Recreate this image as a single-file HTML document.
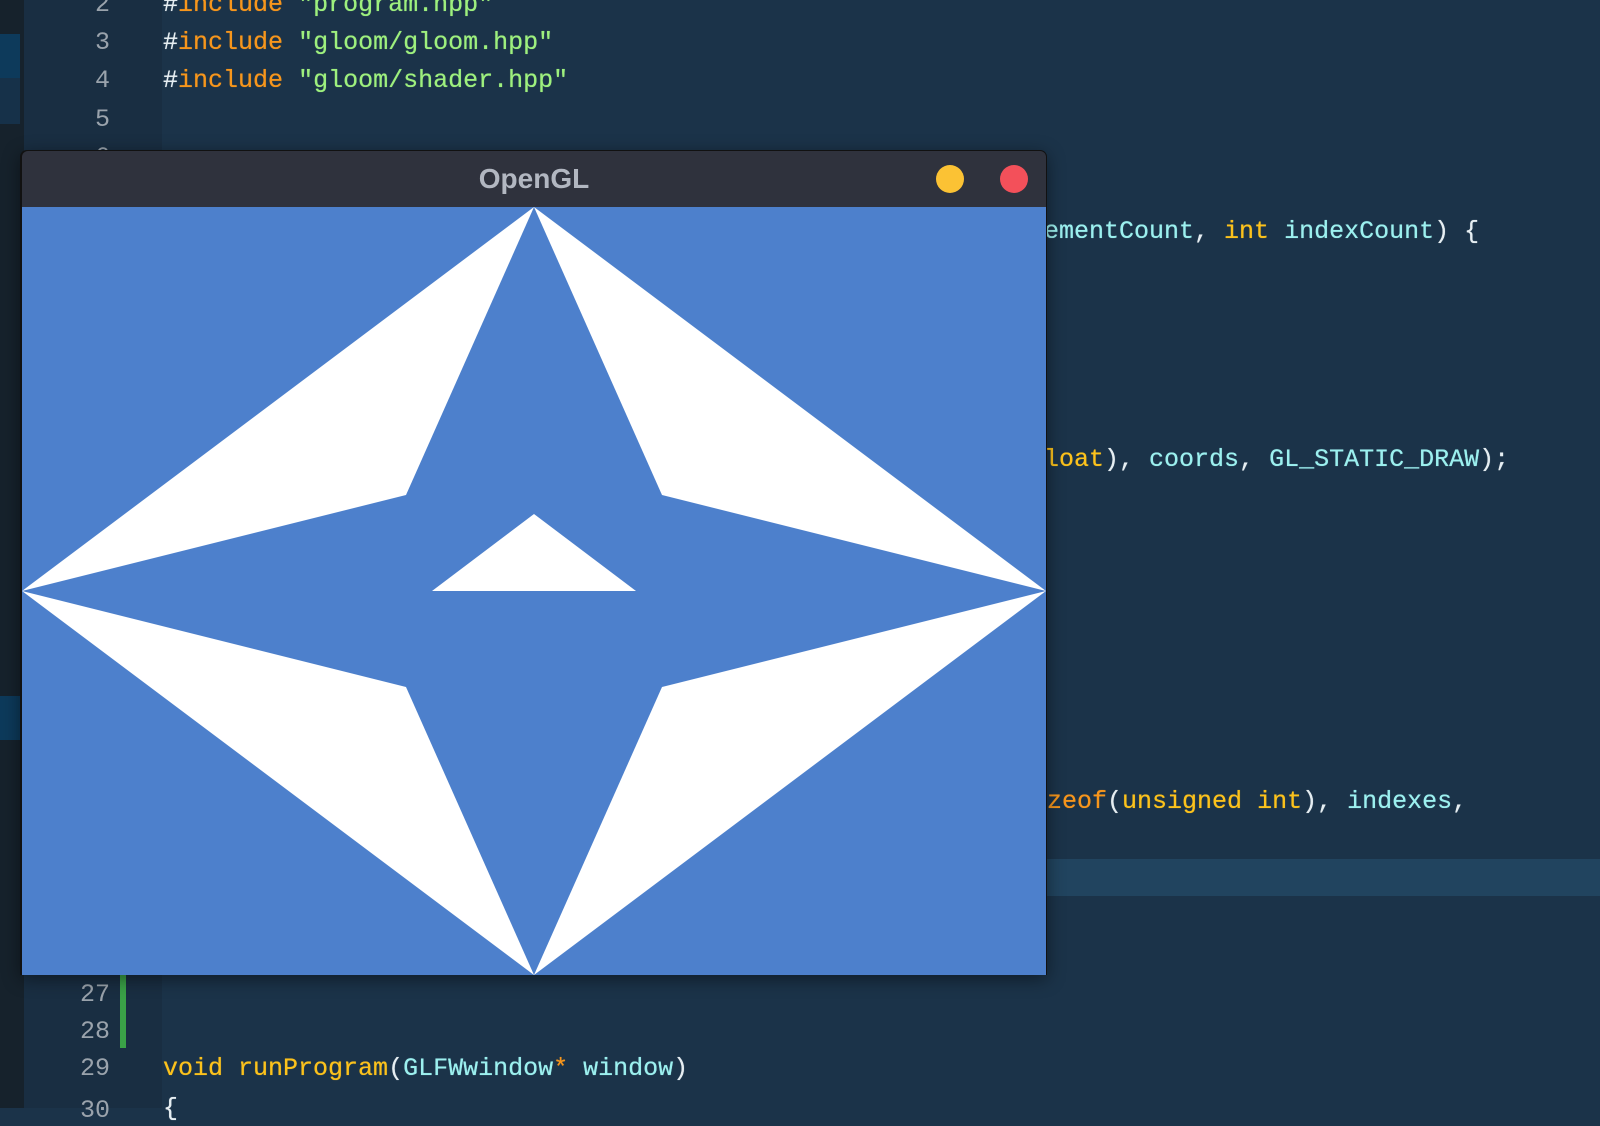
<!DOCTYPE html>
<html><head><meta charset="utf-8"><style>
html,body{margin:0;padding:0;width:1600px;height:1108px;overflow:hidden;background:#1b3349;}
.strip{position:absolute;left:0;top:0;width:24px;height:1108px;background:#16222c;}
.gut{position:absolute;left:24px;top:0;width:138px;height:1108px;background:#192e42;}
.t{position:absolute;font-family:"Liberation Mono",monospace;font-size:25px;line-height:30px;white-space:pre;color:#e6eef2;text-shadow:0 0 0.6px currentColor;}
.n{position:absolute;font-family:"Liberation Mono",monospace;font-size:25px;line-height:30px;color:#9aa3ac;width:86px;text-align:right;left:24px;}
.o{color:#f7961c}.g{color:#9ef07e}.c{color:#9cf0ef}.y{color:#fcc21c}.w{color:#e6eef2}
</style></head><body>
<div class="strip"></div>
<div style="position:absolute;left:0;top:34px;width:20px;height:44px;background:#0d3a5b"></div>
<div style="position:absolute;left:0;top:78px;width:20px;height:46px;background:#163149"></div>
<div style="position:absolute;left:0;top:696px;width:20px;height:44px;background:#0d3a5b"></div>
<div class="gut"></div>
<div style="position:absolute;left:1047px;top:859px;width:553px;height:37px;background:#21445f"></div>
<div style="position:absolute;left:120px;top:975px;width:6px;height:73px;background:#3aa147"></div>

<div class="n" style="top:-10px">2</div>
<div class="n" style="top:28px">3</div>
<div class="n" style="top:66px">4</div>
<div class="n" style="top:105px">5</div>
<div class="n" style="top:143px">6</div>
<div class="n" style="top:980px">27</div>
<div class="n" style="top:1017px">28</div>
<div class="n" style="top:1054px">29</div>
<div class="n" style="top:1096px">30</div>

<div class="t" style="left:163px;top:-10px"><span class="w">#</span><span class="o">include</span> <span class="g">"program.hpp"</span></div>
<div class="t" style="left:163px;top:28px"><span class="w">#</span><span class="o">include</span> <span class="g">"gloom/gloom.hpp"</span></div>
<div class="t" style="left:163px;top:66px"><span class="w">#</span><span class="o">include</span> <span class="g">"gloom/shader.hpp"</span></div>
<div class="t" style="left:1029px;top:217px"><span class="c">lementCount</span>, <span class="y">int</span> <span class="c">indexCount</span>) {</div>
<div class="t" style="left:1029px;top:445px"><span class="y">float</span>), <span class="c">coords</span>, <span class="c">GL_STATIC_DRAW</span>);</div>
<div class="t" style="left:1032px;top:787px"><span class="o">izeof</span>(<span class="y">unsigned</span> <span class="y">int</span>), <span class="c">indexes</span>,</div>
<div class="t" style="left:163px;top:1054px"><span class="y">void</span> <span class="y">runProgram</span>(<span class="c">GLFWwindow</span><span class="o">*</span> <span class="c">window</span>)</div>
<div class="t" style="left:163px;top:1094px">{</div>

<div style="position:absolute;left:20px;top:150px;width:1027px;height:825px;background:#111;border-radius:7px 7px 0 0;box-shadow:0 4px 18px rgba(0,0,0,0.45)"></div>
<div style="position:absolute;left:22px;top:151px;width:1024px;height:56px;background:#2f323d;border-radius:6px 6px 0 0"></div>
<div style="position:absolute;left:434px;top:161px;width:200px;text-align:center;font-family:'Liberation Sans',sans-serif;font-weight:bold;font-size:28px;line-height:36px;color:#b2b7c1">OpenGL</div>
<div style="position:absolute;left:936px;top:165px;width:28px;height:28px;border-radius:50%;background:#fbc234"></div>
<div style="position:absolute;left:1000px;top:165px;width:28px;height:28px;border-radius:50%;background:#f3505a"></div>
<svg style="position:absolute;left:22px;top:207px" width="1024" height="768" viewBox="0 0 1024 768">
<rect width="1024" height="768" fill="#4d80cc"/>
<g fill="#fff">
<polygon points="512,0 0,384 384,288"/>
<polygon points="512,0 1024,384 640,288"/>
<polygon points="0,384 512,768 384,480"/>
<polygon points="1024,384 512,768 640,480"/>
<polygon points="512,307 410,384 614,384"/>
</g></svg>
</body></html>
